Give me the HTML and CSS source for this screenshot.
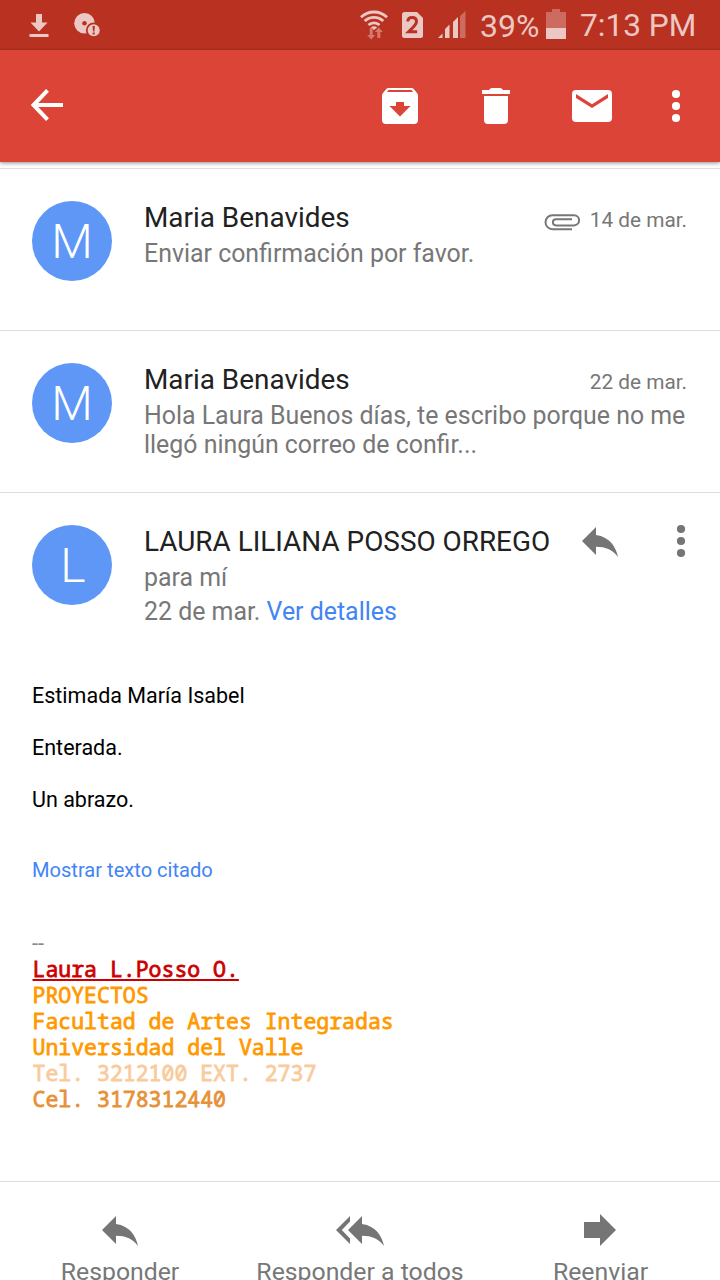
FILE: index.html
```html
<!DOCTYPE html>
<html lang="es">
<head>
<meta charset="utf-8">
<title>Correo</title>
<link rel="stylesheet" href="styles.css">
</head>
<body>
<div class="screen">
  <div class="status">
    <svg class="status-left" width="110" height="50" viewBox="0 0 110 50">
      <path d="M36 14h6v8.500h5.500L39 31.500 30.500 22.500H36zM29.500 34h19v3h-19z" fill="#ecc8c4"/>
      <circle cx="84.500" cy="23.200" r="10.300" fill="#ecc8c4"/>
      <circle cx="84.500" cy="23.200" r="2.300" fill="#b93221"/>
      <circle cx="93.700" cy="30.300" r="7.800" fill="#b93221"/>
      <circle cx="93.700" cy="30.300" r="6" fill="#ecc8c4"/>
      <path d="M92.500 26h2.400l-.5 5.500h-1.400zM92.600 32.500h2.200v2h-2.200z" fill="#b93221"/>
    </svg>
    <svg class="status-net" width="110" height="50" viewBox="0 0 110 50">
      <g fill="none" stroke="#ecc8c4" stroke-width="2.800">
        <path d="M1 17.200a18.800 18.800 0 0 1 26 0"/>
        <path d="M4.700 21.100a13.400 13.400 0 0 1 18.600 0"/>
        <path d="M8.500 25a8 8 0 0 1 11 0"/>
      </g>
      <path d="M10.800 27.200q3.200-2 6.400 0L14 30z" fill="#ecc8c4"/>
      <path d="M9.700 28h3v7h2.500l-4 4.500-4-4.500h2.500zM17.300 38v-6h-2.500l4-4.500 4 4.500h-2.500v6z" fill="#d27a70"/>
      <path d="M44.500 12H57l6 6v17.500q0 2.500-2.500 2.500h-16q-2.500 0-2.500-2.500v-21q0-2.500 2.500-2.500z" fill="#ecc8c4"/>
      <path d="M47.800 21.500q.2-3.900 4.400-3.900 4.300 0 4.300 4 0 2.300-3.600 5.900l-4.300 4.300h8.500" fill="none" stroke="#b93221" stroke-width="3"/>
      <path d="M78 38l4.500-4.500V38zM85 38v-9l4.500-4.500V38zM93 38V22l5-5v21z" fill="#ecc8c4"/>
      <path d="M100 38V16l5.500-5v27z" fill="#ce6b60"/>
    </svg>
    <span class="battery-text">39%</span>
    <svg class="battery" width="20" height="30" viewBox="0 0 20 30"><path d="M0 3h6V0h8v3h6v16H0z" fill="#ce6b60"/><path d="M0 19h20v11H0z" fill="#ecc8c4"/></svg>
    <span class="clock">7:13 PM</span>
  </div>
  <div class="appbar">
    <svg class="back" width="34" height="34" viewBox="0 0 34 34"><path d="M33 17H4M17.500 2.300L3.500 17l14 14.700" fill="none" stroke="#fff" stroke-width="4"/></svg>
    <svg class="archive" width="36" height="36" viewBox="0 0 36 36"><path fill="#fff" fill-rule="evenodd" d="M6.500 0h23q1.200 0 2 .8L35 5q1 1 1 2.500V32q0 4-4 4H4q-4 0-4-4V7.500Q0 6 1 5L4.500.8Q5.300 0 6.500 0zM5 4h26l-1.500-2h-23zM14 14v4H7.500L18 28.500 28.500 18H22v-4z"/></svg>
    <svg class="trash" width="28" height="36" viewBox="0 0 28 36"><path fill="#fff" d="M0 2h7l2-2h10l2 2h7v4H0zM2 8h24v24q0 4-4 4H6q-4 0-4-4z"/></svg>
    <svg class="mail" width="40" height="32" viewBox="0 0 40 32"><rect width="40" height="32" rx="4" fill="#fff"/><path d="M4 4l16 10.300L36 4v4L20 18 4 8z" fill="#db4437"/></svg>
    <svg class="more" width="8" height="32" viewBox="0 0 8 32" fill="#fff"><circle cx="4" cy="4" r="4.100"/><circle cx="4" cy="16" r="4.100"/><circle cx="4" cy="28" r="4.100"/></svg>
  </div>
  <div class="thread">
    <div class="message">
      <div class="avatar">M</div>
      <div class="content">
        <div class="head"><span class="name">Maria Benavides</span>
          <svg class="clip" width="36" height="17" viewBox="0 0 36 17"><path d="M28 15.200H8.500a7 7 0 0 1 0-14H30a5 5 0 0 1 0 10.200H12a3 3 0 0 1 0-6.200h16" fill="none" stroke="#777" stroke-width="2"/></svg>
          <span class="date">14 de mar.</span></div>
        <div class="snippet">Enviar confirmación por favor.</div>
      </div>
    </div>
    <div class="message">
      <div class="avatar">M</div>
      <div class="content">
        <div class="head"><span class="name">Maria Benavides</span><span class="date">22 de mar.</span></div>
        <div class="snippet">Hola Laura Buenos días, te escribo porque no me<br>llegó ningún correo de confir...</div>
      </div>
    </div>
    <div class="message open">
      <div class="avatar initial-l">L</div>
      <div class="content">
        <div class="head"><span class="name long">LAURA LILIANA POSSO ORREGO</span>
          <svg class="reply" width="36" height="30" viewBox="0 0 36 30"><path d="M14 8V0L0 14l14 14v-8.200c10 0 17 3.200 22 10.200C34 20 28 10 14 8z" fill="#757575"/></svg>
          <svg class="item-more" width="8" height="32" viewBox="0 0 8 32" fill="#757575"><circle cx="4" cy="4" r="4.100"/><circle cx="4" cy="16" r="4.100"/><circle cx="4" cy="28" r="4.100"/></svg></div>
        <div class="meta">para mí</div>
        <div class="meta">22 de mar. <a class="link">Ver detalles</a></div>
      </div>
    </div>
  </div>
  <div class="body">
    <p class="para">Estimada María Isabel</p>
    <p class="para">Enterada.</p>
    <p class="para">Un abrazo.</p>
    <a class="quoted">Mostrar texto citado</a>
    <div class="signature">
      <div class="dashes">--</div>
      <div class="mono"><span class="owner">Laura L.Posso O.</span></div>
      <div class="mono">PROYECTOS</div>
      <div class="mono">Facultad de Artes Integradas</div>
      <div class="mono">Universidad del Valle</div>
      <div class="mono pale">Tel. 3212100 EXT. 2737</div>
      <div class="mono dark">Cel. 3178312440</div>
    </div>
  </div>
  <div class="actions">
    <div class="action"><svg width="48" height="32" viewBox="0 0 48 32"><path d="M20 8V0L6 14l14 14v-8.200c10 0 17 3.200 22 10.200C40 20 34 10 20 8z" fill="#757575"/></svg><span>Responder</span></div>
    <div class="action"><svg width="48" height="32" viewBox="0 0 48 32"><path d="M26 8V0L12 14l14 14v-8.200c10 0 17 3.200 22 10.200C46 20 40 10 26 8zM14 0v5.500L5.800 14l8.200 8.500V28L0 14z" fill="#757575"/></svg><span>Responder a todos</span></div>
    <div class="action"><svg width="48" height="32" viewBox="0 0 48 32"><path d="M8 6h16v-8l16 16-16 16v-8H8z" fill="#757575"/></svg><span class="forward">Reenviar</span></div>
  </div>
</div>
</body>
</html>
```
FILE: styles.css
```css
body { margin: 0; background: #fff; font-family: Roboto, sans-serif; }
svg { display: block; flex: none; overflow: visible; }
.screen { width: 720px; height: 1280px; overflow: hidden; display: flex; flex-direction: column; }
.status { height: 50px; flex: none; display: flex; background: #b93221; color: #ecc8c4; font-size: 32px; line-height: 52px; white-space: nowrap; }
.status-net { margin-left: 250px; }
.battery-text { width: 66px; margin-left: 10px; }
.battery { margin-top: 9px; }
.clock { margin-left: 14px; font-size: 31.600px; }
.appbar { height: 112px; flex: none; display: flex; align-items: center; background: #db4437; box-shadow: 0 1px 4px rgba(0,0,0,.45); }
.back { margin: 0 318px 2px 30px; }
.trash { margin-left: 64px; }
.mail { margin-left: 62px; }
.more { margin-left: 60px; }
.thread { margin-top: 6px; flex: none; }
.message { height: 162px; box-sizing: border-box; border-top: 1px solid #dedede; padding: 32px 33px 0 32px; display: flex; }
.avatar { width: 80px; height: 80px; box-sizing: border-box; flex: none; border-radius: 50%; background: #5e97f6; color: #fff; font-size: 48px; font-weight: 300; line-height: 82px; text-align: center; margin-right: 32px; }
.initial-l { padding-left: 2px; }
.content { flex: 1; min-width: 0; white-space: nowrap; margin-top: -1px; }
.head { display: flex; height: 34px; margin-bottom: 5px; }
.name { color: #212121; font-size: 27.900px; line-height: 36px; flex: 1; }
.long { flex: none; width: 438px; }
.date { color: #777; font-size: 20.800px; line-height: 41px; }
.clip { margin: 14px 10px 0 0; }
.snippet { color: #777; font-size: 24.900px; line-height: 29px; }
.open { height: 190px; }
.reply { margin-top: 3px; }
.item-more { margin: 1px 0 0 59px; }
.meta { color: #777; font-size: 24.900px; line-height: 34px; position: relative; top: -2px; }
.link { color: #4285f4; }
.body { flex: none; box-sizing: border-box; height: 499px; padding: 1px 0 0 32px; color: #000; font-size: 21.500px; line-height: 26px; }
.para { margin: 0 0 26px; }
.quoted { display: block; margin-top: 44px; color: #4285f4; font-size: 20.100px; }
.signature { margin-top: 48px; }
.dashes { color: #888; }
.mono { font-family: "Droid Sans Mono", "Noto Sans Mono", "DejaVu Sans Mono", monospace; font-size: 21.500px; line-height: 24px; color: #ff9900; height: 26px; padding-left: .5px; -webkit-text-stroke: .8px currentColor; white-space: pre; }
.owner { color: #cc0000; text-decoration: underline; }
.pale { color: #f9cb9c; }
.dark { color: #e69138; }
.actions { flex: none; height: 99px; border-top: 1px solid #dedede; display: grid; grid-template-columns: repeat(3, 1fr); }
.action { display: flex; flex-direction: column; align-items: center; padding-top: 34px; color: #777; font-size: 24.800px; line-height: 30px; white-space: nowrap; }
.action span { margin-top: 9px; }
.action .forward { padding-left: 1px; }
```
